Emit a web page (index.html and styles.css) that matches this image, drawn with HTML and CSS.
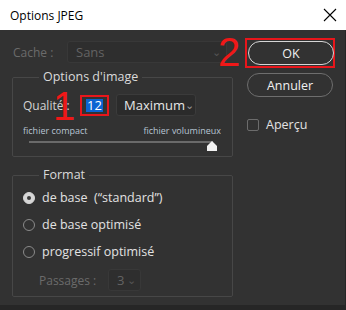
FILE: index.html
```html
<!DOCTYPE html>
<html lang="fr">
<head>
    <meta charset="UTF-8">
    <title>Options JPEG</title>
    <link rel="stylesheet" href="styles.css">
</head>
<body>
    <div class="dialog">
        <div class="titlebar">
            <span class="title">Options JPEG</span>
            <svg class="close" width="14" height="14" viewBox="0 0 14 14"><path d="M1 1 L13 13 M13 1 L1 13" stroke="#000" stroke-width="1.1"/></svg>
        </div>

        <div class="body">
            <div class="left">
                <div class="cache-row">
                    <span class="label disabled">Cache :</span>
                    <div class="select select-wide disabled"><span>Sans</span><span class="chev">&#8964;</span></div>
                </div>

                <fieldset class="group group-image">
                    <legend>Options d'image</legend>
                    <div class="quality-row">
                        <span class="label">Qualité :</span>
                        <div class="quality-box">
                            <span class="sel-text">12</span>
                            <span class="mark mark-1">1</span>
                        </div>
                        <div class="select select-quality"><span>Maximum</span><span class="chev">&#8964;</span></div>
                    </div>
                    <div class="size-labels">
                        <span>fichier compact</span>
                        <span>fichier volumineux</span>
                    </div>
                    <div class="slider">
                        <div class="track"></div>
                        <svg class="thumb" width="12" height="10" viewBox="0 0 12 10"><path d="M6 0 L11 5 L11 10 L1 10 L1 5 Z" fill="#f2f2f2"/></svg>
                    </div>
                </fieldset>

                <fieldset class="group group-format">
                    <legend>Format</legend>
                    <div class="radio-row first"><span class="radio checked"></span><span class="label">de base&nbsp; (“standard”)</span></div>
                    <div class="radio-row"><span class="radio"></span><span class="label">de base optimisé</span></div>
                    <div class="radio-row"><span class="radio"></span><span class="label">progressif optimisé</span></div>
                    <div class="passes-row">
                        <span class="label disabled">Passages :</span>
                        <div class="select select-small disabled"><span>3</span><span class="chev">&#8964;</span></div>
                    </div>
                </fieldset>
            </div>

            <div class="right">
                <div class="ok-wrap">
                    <span class="mark mark-2">2</span>
                    <button class="btn btn-ok">OK</button>
                </div>
                <button class="btn btn-cancel">Annuler</button>
                <div class="check-row"><span class="check"></span><span class="label">Aperçu</span></div>
            </div>
        </div>
        <div class="screen"></div>
    </div>
</body>
</html>
```

FILE: styles.css
```css
body { margin: 0; background-color: #282828; font-family: 'Open Sans', 'Noto Sans', sans-serif; font-size: 12px; color: #d2d2d2; }
.dialog { width: 346px; height: 310px; overflow: hidden; }

.titlebar {
    height: 30px;
    background-color: #ffffff;
    display: flex;
    align-items: center;
    justify-content: space-between;
    padding: 0 9px 0 10px;
    box-sizing: border-box;
}
.title { color: #000; font-size: 12px; }

.body {
    height: 275px;
    background-color: #323232;
    border-right: 1px solid #262626;
    display: flex;
    padding: 11px 0 0 12px;
    box-sizing: border-box;
}
.screen { height: 5px; background-color: #262626; }

.left { width: 221px; flex: none; }
.label { white-space: nowrap; }
.disabled { color: #6b6b6b; }

.cache-row { display: flex; align-items: center; height: 22px; }
.cache-row .label { width: 54px; padding-left: 1px; }

.select {
    display: flex;
    align-items: center;
    justify-content: space-between;
    box-sizing: border-box;
    background-color: #2b2b2b;
    border: 1px solid #3b3b3b;
    border-radius: 3px;
    padding: 0 5px 0 8px;
    color: #e6e6e6;
    font-size: 13px;
}
.select.disabled { color: #636363; border-color: #383838; background-color: #2e2e2e; }
.chev { font-size: 11px; line-height: 10px; height: 10px; color: #9a9a9a; }
.disabled .chev { color: #555; }
.select-wide { width: 160px; height: 22px; }

.group {
    margin: 0;
    padding: 0 0 0 10px;
    border: 1px solid #474747;
    border-radius: 2px;
    box-sizing: border-box;
    min-width: 0;
    width: 221px;
}
.group legend {
    margin-left: 16px;
    padding: 0 4px;
    color: #dadada;
    font-size: 12.5px;
    line-height: 16px;
}
.group-image { margin-top: 6px; height: 88px; }
.group-format { margin-top: 10px; height: 130px; }

.quality-row { display: flex; align-items: center; height: 22px; margin-top: 9px; }
.quality-row .label { width: 57px; }
.quality-box {
    position: relative;
    width: 29px;
    height: 21px;
    box-sizing: border-box;
    border: 2px solid #e8161b;
    display: flex;
    align-items: center;
    padding-left: 4px;
}
.sel-text { background-color: #0a64d2; color: #fff; font-size: 13px; line-height: 13px; padding: 0 1px; }
.select-quality { width: 80px; height: 22px; margin-left: 7px; padding-left: 7px; }

.mark { position: absolute; color: #f01818; font-family: 'Liberation Sans', sans-serif; font-size: 40px; line-height: 1; }
.mark-1 { left: -29px; top: -11px; }
.mark-2 { left: -29px; top: -8px; }

.size-labels {
    display: flex;
    justify-content: space-between;
    width: 198px;
    margin-top: 9px;
    font-size: 9px;
    line-height: 12px;
    color: #b7c4d2;
    overflow: hidden;
    white-space: nowrap;
}
.slider { position: relative; width: 189px; height: 10px; margin: 0 0 0 6px; }
.track { height: 2px; background-color: #6a6a6a; margin-top: 4px; width: 184px; }
.thumb { position: absolute; right: 0; top: 0; }

.radio-row { display: flex; align-items: center; height: 27px; gap: 7px; color: #e2e2e2; font-size: 12.5px; }
.radio-row.first { margin-top: 1px; }
.radio {
    width: 10px;
    height: 10px;
    border: 1px solid #8a8a8a;
    border-radius: 50%;
}
.radio.checked {
    background-color: #d6d6d6;
    border-color: #d6d6d6;
    position: relative;
}
.radio.checked::after {
    content: "";
    position: absolute;
    left: 3px;
    top: 3px;
    width: 4px;
    height: 4px;
    border-radius: 50%;
    background-color: #3a3a3a;
}
.passes-row { display: flex; align-items: center; height: 22px; margin: 4px 0 0 16px; }
.passes-row .label { width: 69px; }
.select-small { width: 33px; height: 22px; background-color: #2a2a2a; padding: 0 4px 0 8px; }

.right { margin-left: 14px; width: 86px; display: flex; flex-direction: column; }
.ok-wrap {
    position: relative;
    border: 2px solid #e8161b;
    margin: -3px -2px 0 -2px;
    padding: 1px;
}
.btn {
    display: block;
    width: 86px;
    height: 24px;
    background-color: #323232;
    border-radius: 12px;
    color: #f0f0f0;
    font-family: 'Open Sans', 'Noto Sans', sans-serif;
    font-size: 12.5px;
    padding: 0;
}
.btn-ok { border: 1.5px solid #d6d6d6; }
.btn-cancel { border: 1px solid #6e6e6e; margin-top: 5px; }

.check-row { display: flex; align-items: center; gap: 7px; margin-top: 19px; color: #e2e2e2; font-size: 12.5px; }
.check { width: 10px; height: 10px; border: 1px solid #6c6c6c; border-radius: 2px; }
```
